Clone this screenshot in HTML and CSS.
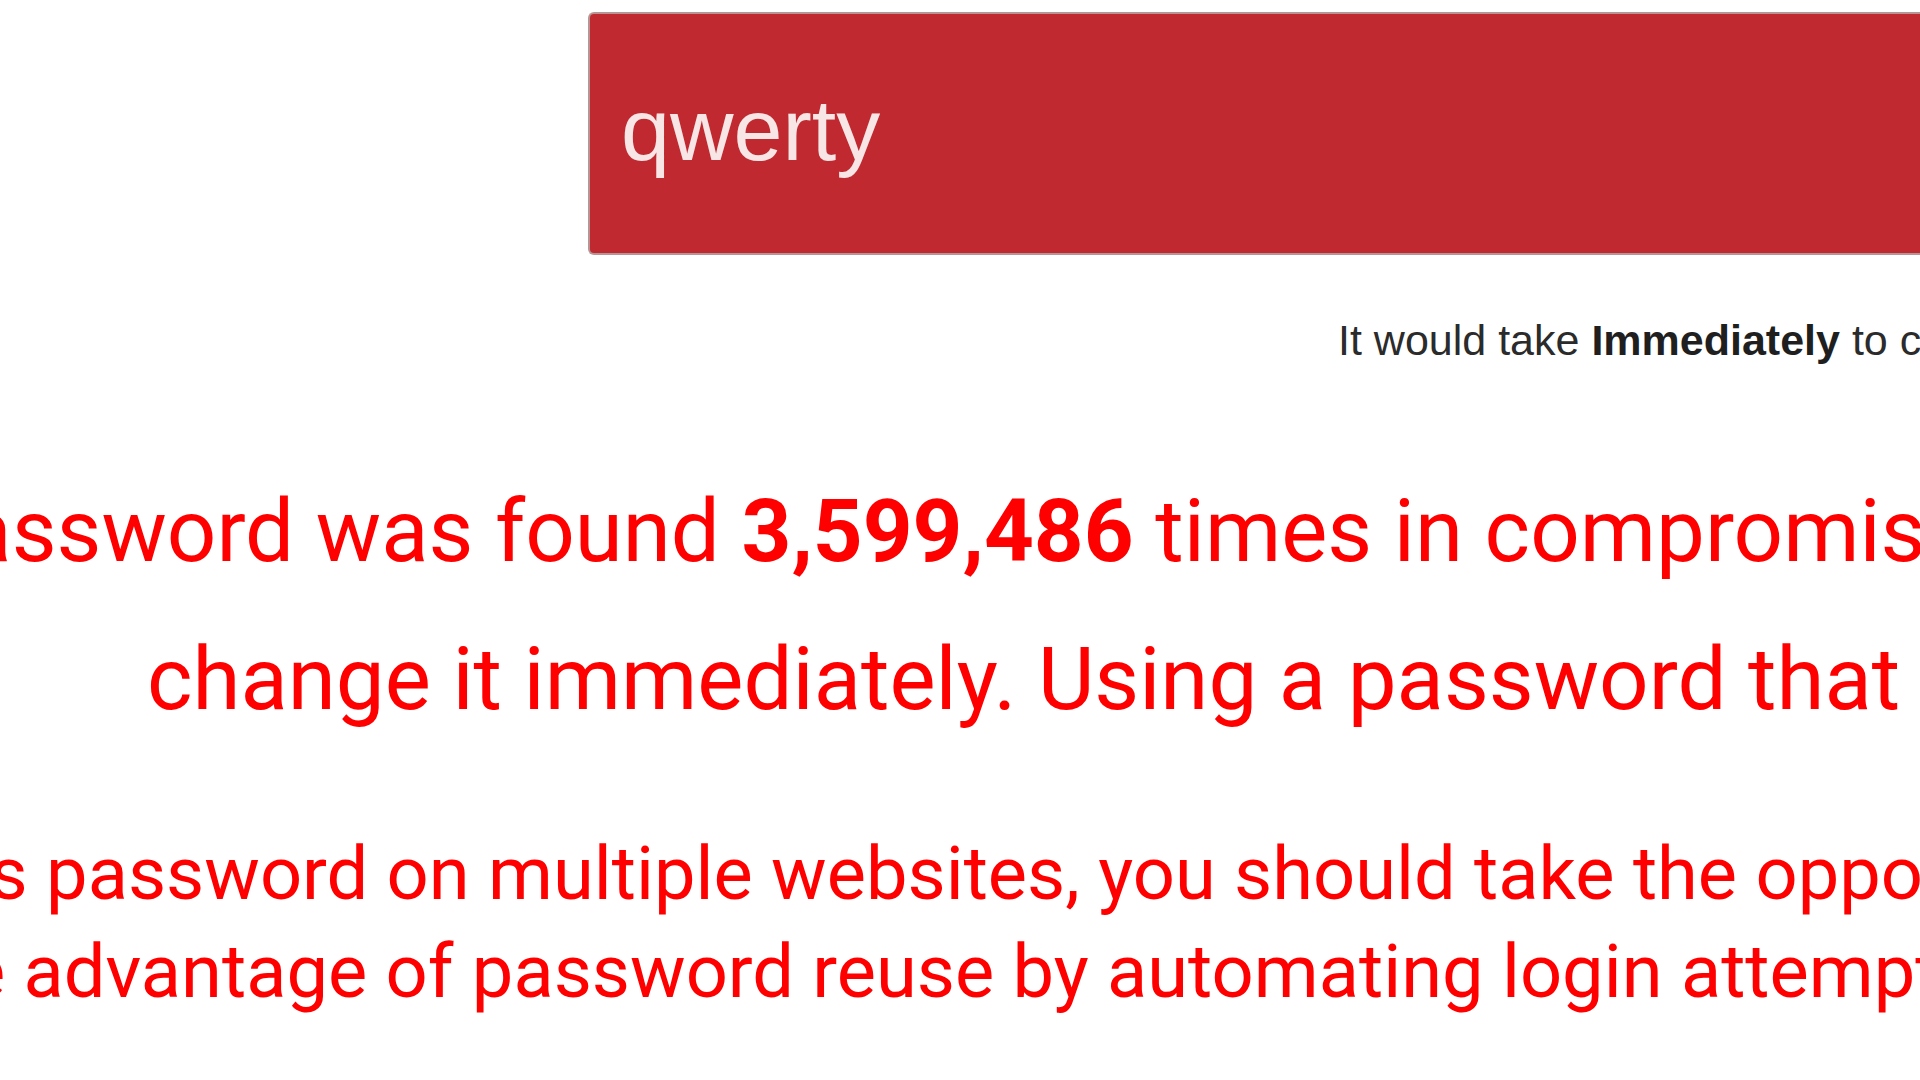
FILE: index.html
```html
<!DOCTYPE html>
<html lang="en">
<head>
<meta charset="utf-8">
<title>Password check</title>
<link rel="stylesheet" href="styles.css">
</head>
<body>
<main class="page">
  <div class="field-row">
    <div class="field"><span class="field-value">qwerty</span></div>
  </div>
  <p class="crack-time">It would take <strong>Immediately</strong> to crack your password</p>
  <p class="warning">
    <span class="line line-1">This password was found <strong>3,599,486</strong> times in compromised password databases. You should</span>
    <span class="line line-2">change it immediately. Using a password that has been leaked is very risky.</span>
  </p>
  <p class="advice">
    <span class="line line-a">If you use this password on multiple websites, you should take the opportunity to change it everywhere.</span>
    <span class="line line-b">Attackers take advantage of password reuse by automating login attempts on other sites.</span>
  </p>
</main>
</body>
</html>
```
FILE: styles.css
```css
html, body {
  margin: 0;
  padding: 0;
  background: #ffffff;
}
body {
  width: 1920px;
  height: 1080px;
  overflow: hidden;
}
.page {
  display: flex;
  flex-direction: column;
  width: 1920px;
}
.field-row {
  padding-top: 12px;
  padding-left: 588px;
}
.field {
  height: 239px;
  background: #c0292f;
  border: 2px solid #b79596;
  border-right: none;
  border-radius: 6px 0 0 6px;
  display: flex;
  align-items: center;
  padding-left: 31px;
  box-sizing: content-box;
}
.field-value {
  font-family: "Liberation Sans", Arial, sans-serif;
  font-size: 88px;
  line-height: 1;
  color: #f8e6e6;
  margin-top: -8px;
}
.crack-time {
  margin: 60px 0 0 1338px;
  font-family: "Liberation Sans", Arial, sans-serif;
  font-size: 43px;
  line-height: 50px;
  color: #2b2b2b;
  white-space: nowrap;
}
.crack-time strong {
  font-weight: 700;
  color: #1f1f1f;
}
.warning, .advice {
  margin: 0;
  font-family: Roboto, "Noto Sans", sans-serif;
  color: #fe0000;
  white-space: nowrap;
  display: flex;
  flex-direction: column;
}
.warning {
  margin-top: 92px;
  font-size: 87px;
  line-height: 148px;
}
.warning strong {
  font-weight: 700;
}
.advice {
  margin-top: 72px;
  font-size: 74px;
  line-height: 98px;
}
.line {
  display: block;
}
.line-1 { margin-left: -272px; }
.line-2 { margin-left: 147px; }
.line-a { margin-left: -430px; }
.line-b { margin-left: -468px; }
```
